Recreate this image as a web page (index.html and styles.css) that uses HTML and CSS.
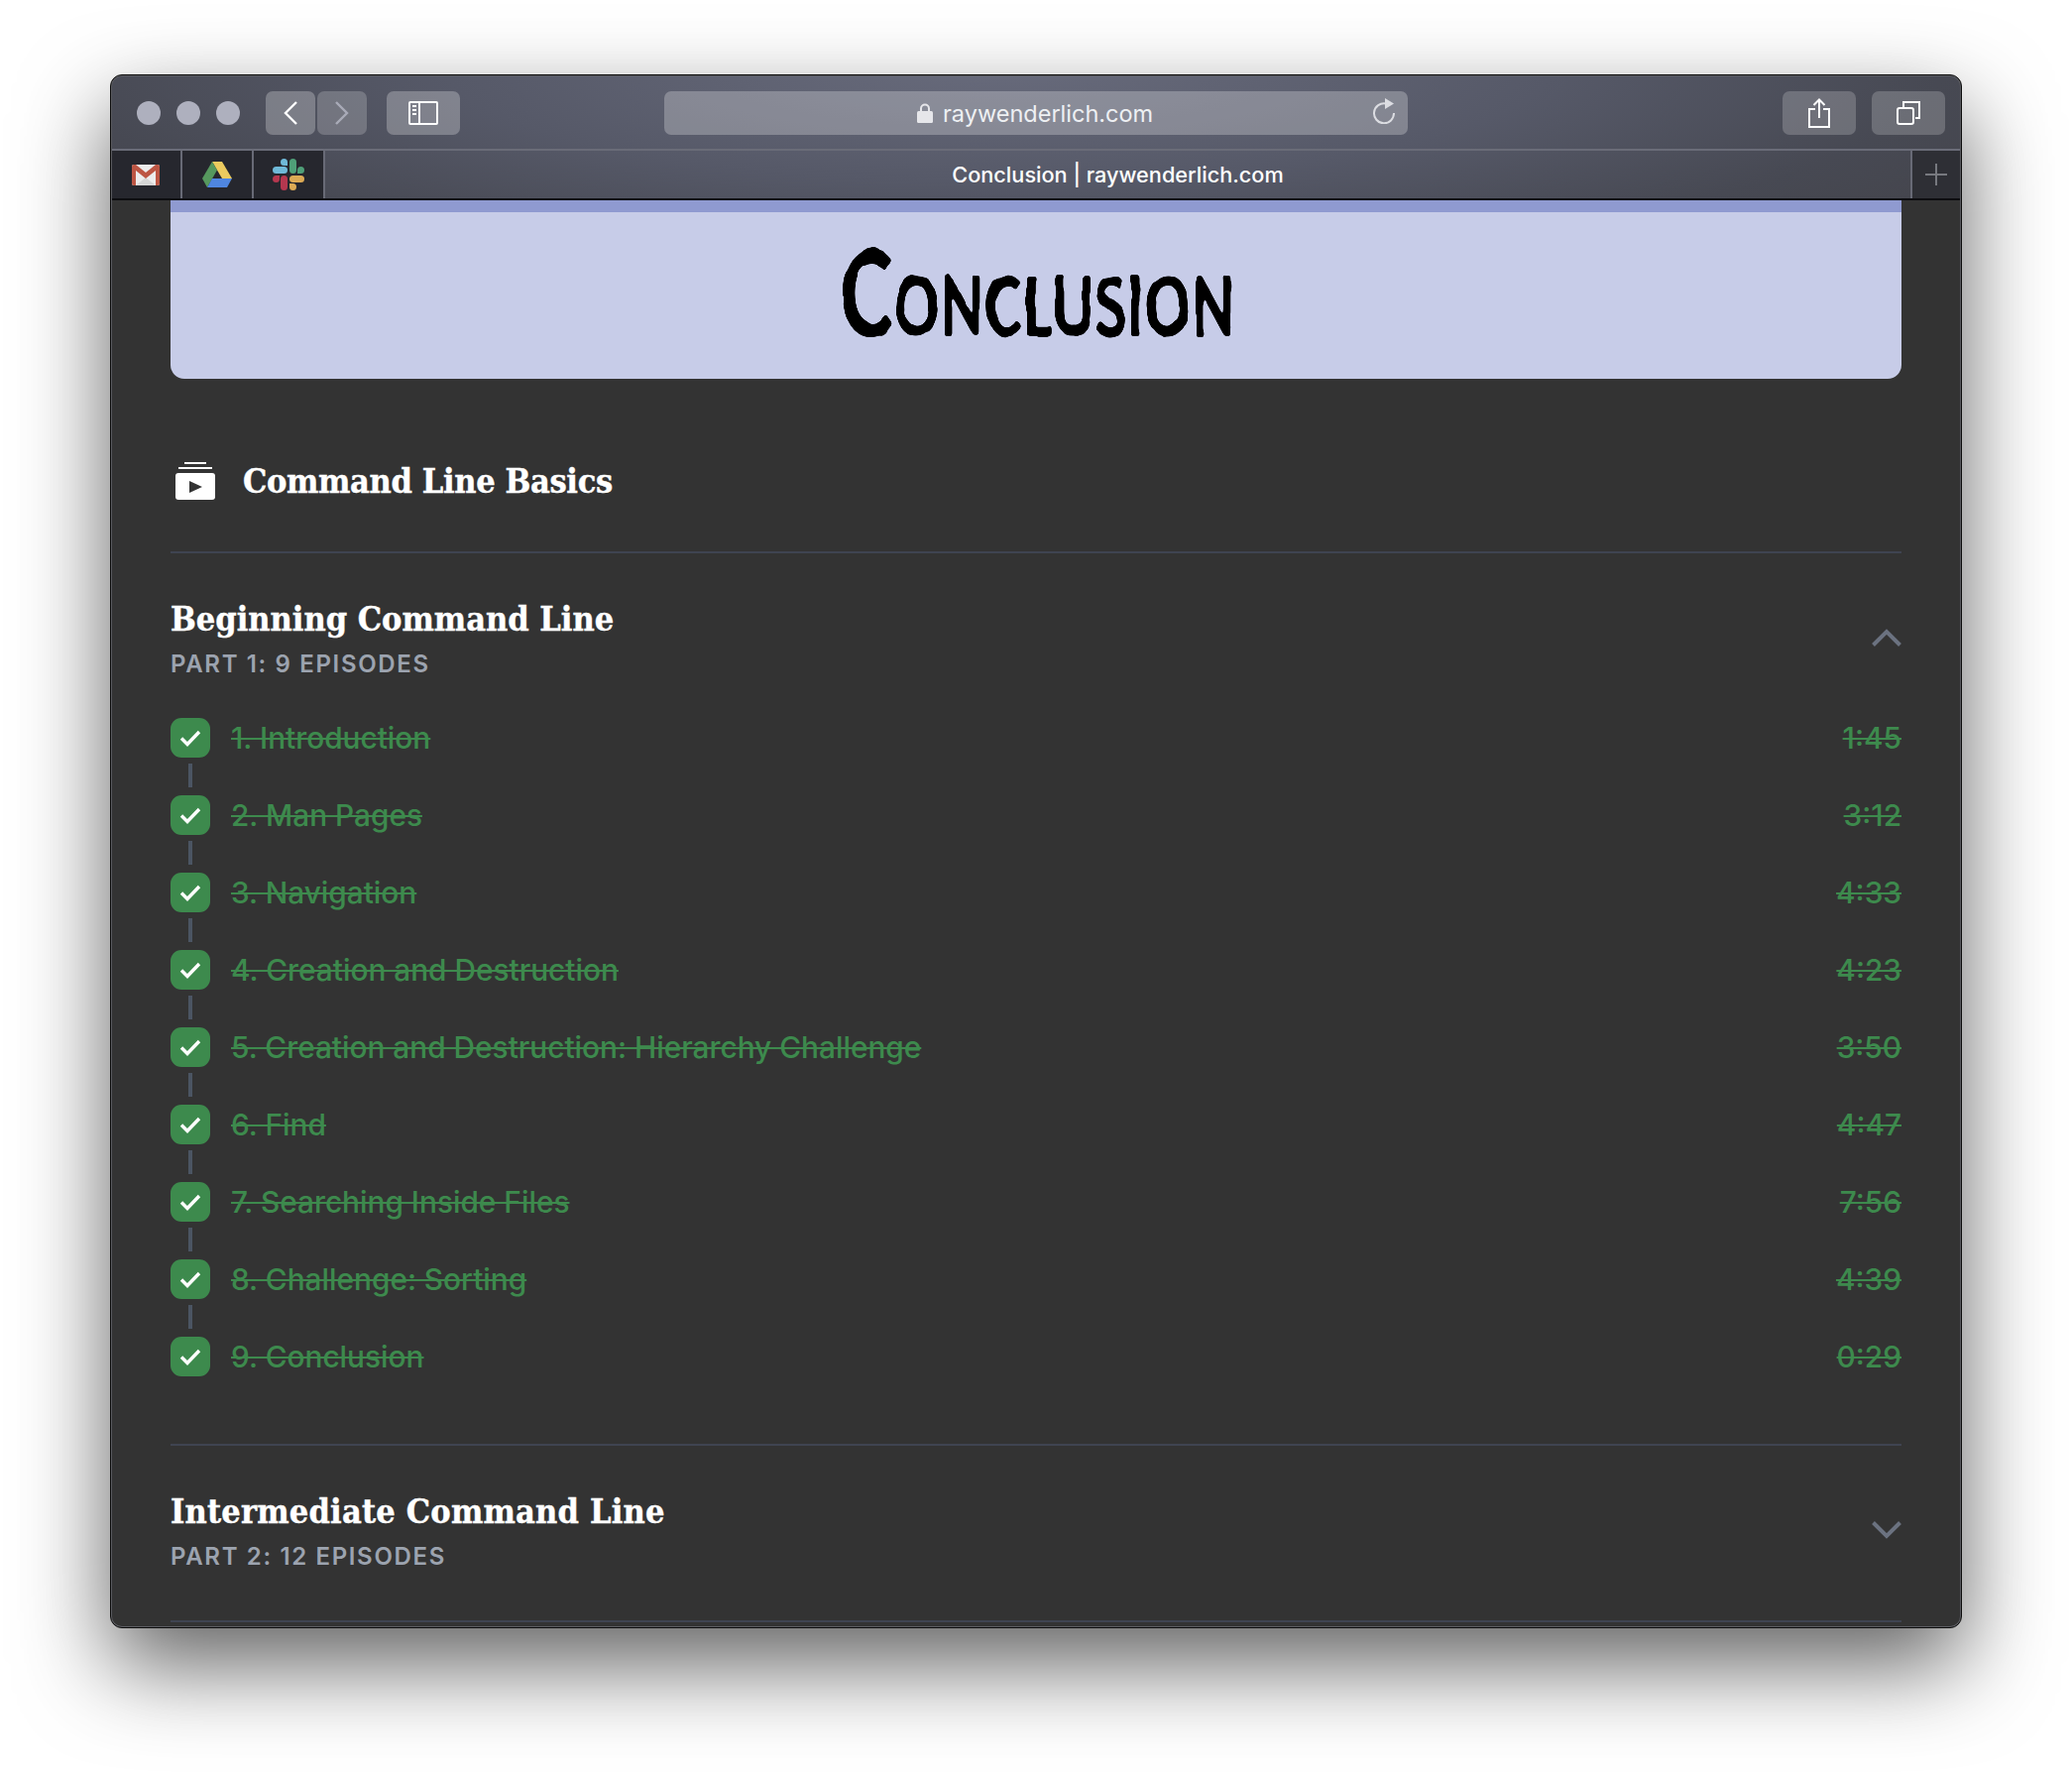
FILE: index.html
```html
<!DOCTYPE html>
<html lang="en">
<head>
<meta charset="utf-8">
<title>Conclusion | raywenderlich.com</title>
<link rel="stylesheet" href="styles.css">
</head>
<body>
<svg class="defs" width="0" height="0" aria-hidden="true"><filter id="hand" x="-5%" y="-5%" width="110%" height="110%"><feTurbulence type="fractalNoise" baseFrequency="0.035" numOctaves="2" seed="4" result="n"/><feDisplacementMap in="SourceGraphic" in2="n" scale="7" result="d"/><feGaussianBlur in="d" stdDeviation="1.6"/><feComponentTransfer><feFuncA type="linear" slope="6" intercept="-2.4"/></feComponentTransfer></filter></svg>
<div class="window">
  <header class="chrome">
    <div class="toolbar">
      <div class="traffic"><span class="dot"></span><span class="dot"></span><span class="dot"></span></div>
      <div class="nav">
        <button class="btn btn-nav"><svg width="14" height="24" viewBox="0 0 14 24"><path d="M13 1 2 12l11 11" class="stroke-w"/></svg></button>
        <button class="btn btn-nav btn-dim"><svg width="14" height="24" viewBox="0 0 14 24"><path d="M1 1l11 11L1 23" class="stroke-d"/></svg></button>
      </div>
      <button class="btn btn-wide btn-side"><svg width="30" height="24" viewBox="0 0 30 24"><rect x="1" y="1" width="28" height="22" rx="1" class="stroke-t"/><path d="M11 1v22" class="stroke-t"/><path d="M4 5h4M4 9h4M4 13h4" class="stroke-t"/></svg></button>
      <div class="url">
        <span class="url-text"><svg class="lock" width="16" height="20" viewBox="0 0 16 20"><path d="M4 9V5.500a4 4 0 0 1 8 0V9" fill="none" stroke="#e6e6ea" stroke-width="2"/><rect y="8" width="16" height="12" rx="1.500" fill="#e6e6ea"/></svg>raywenderlich.com</span>
        <svg class="reload" width="24" height="26" viewBox="0 0 24 26"><path d="M14 5.500A10 10 0 1 0 22 15" fill="none" stroke="#dcdde2" stroke-width="2"/><path d="M13 0l9 5.500-9 5.500z" fill="#dcdde2"/></svg>
      </div>
      <div class="actions">
        <button class="btn btn-wide btn-right"><svg width="22" height="30" viewBox="0 0 22 30"><path d="M7 11H1v18h20V11h-6M11 20V2M5.500 7 11 1.500 16.500 7" class="stroke-t"/></svg></button>
        <button class="btn btn-wide btn-right"><svg width="24" height="24" viewBox="0 0 24 24"><rect x="1" y="7" width="16" height="16" rx="2" class="stroke-t"/><path d="M7 6V1h16v16h-4" class="stroke-t"/></svg></button>
      </div>
    </div>
    <div class="tabbar">
      <div class="pin"><svg width="28" height="21" viewBox="0 0 28 21"><rect width="28" height="21" rx="2" fill="#ececec"/><path d="M4 21 14 13 24 21z" fill="#d6d6d6"/><path d="M0 2Q0 0 2 0h2l10 8 10-8h2q2 0 2 2v17q0 2-2 2h-2V6L14 14 4 6v15H2q-2 0-2-2z" fill="#bd5644"/></svg></div>
      <div class="pin"><svg width="30" height="26" viewBox="0 0 30 26"><path d="M10 0h10l10 17H20z" fill="#eccb5f"/><path d="M10 0l5 8.500L5 26 0 17z" fill="#56985e"/><path d="M10 17h20l-5 9H5z" fill="#4f86e0"/></svg></div>
      <div class="pin"><svg width="32" height="32" viewBox="0 0 32 32"><path d="M11.500 0a3.500 3.500 0 0 1 3.500 3.500V7h-3.500a3.500 3.500 0 0 1 0-7z" fill="#6fb9d8"/><rect y="8" width="15" height="7" rx="3.500" fill="#6fb9d8"/><rect x="17" width="7" height="15" rx="3.500" fill="#4f9f78"/><path d="M25 11.500a3.500 3.500 0 1 1 3.500 3.500H25z" fill="#4f9f78"/><path d="M7 20.500a3.500 3.500 0 1 1-3.500-3.500H7z" fill="#b5374f"/><rect x="8" y="17" width="7" height="15" rx="3.500" fill="#b5374f"/><rect x="17" y="17" width="15" height="7" rx="3.500" fill="#dcaa55"/><path d="M17 25h3.500a3.500 3.500 0 1 1-3.500 3.500z" fill="#dcaa55"/></svg></div>
      <div class="tab-title">Conclusion | raywenderlich.com</div>
      <div class="new-tab"><svg width="22" height="22" viewBox="0 0 22 22"><path d="M11 0v22M0 11h22" stroke="#77797f" stroke-width="2"/></svg></div>
    </div>
  </header>
  <main class="page">
    <div class="hero"><div class="hero-title"><span class="hero-cap">C</span>ONCLUSION</div></div>
    <div class="course">
      <svg width="40" height="38" viewBox="0 0 40 38"><path d="M9 1h22M3 6h34" stroke="#fff" stroke-width="2"/><rect y="11" width="40" height="27" rx="3" fill="#fff"/><path d="M14 19v12l13-6z" fill="#333"/></svg>
      <h1 class="course-title">Command Line Basics</h1>
    </div>
    <section class="part">
      <div class="part-head">
        <div><h2 class="part-title">Beginning Command Line</h2><p class="part-sub">PART 1: 9 EPISODES</p></div>
        <svg class="chev" width="30" height="18" viewBox="0 0 30 18"><path d="M1.500 16.500 15 3l13.500 13.500" fill="none" stroke="#6b7280" stroke-width="4"/></svg>
      </div>
      <ol class="episodes">
        <li class="ep"><span class="check"><svg width="22" height="18" viewBox="0 0 22 18"><path d="M2 9.500l6 6L20 3" class="tick"/></svg></span><span class="ep-name">1. Introduction</span><span class="ep-time">1:45</span></li>
        <li class="ep"><span class="check"><svg width="22" height="18" viewBox="0 0 22 18"><path d="M2 9.500l6 6L20 3" class="tick"/></svg></span><span class="ep-name">2. Man Pages</span><span class="ep-time">3:12</span></li>
        <li class="ep"><span class="check"><svg width="22" height="18" viewBox="0 0 22 18"><path d="M2 9.500l6 6L20 3" class="tick"/></svg></span><span class="ep-name">3. Navigation</span><span class="ep-time">4:33</span></li>
        <li class="ep"><span class="check"><svg width="22" height="18" viewBox="0 0 22 18"><path d="M2 9.500l6 6L20 3" class="tick"/></svg></span><span class="ep-name">4. Creation and Destruction</span><span class="ep-time">4:23</span></li>
        <li class="ep"><span class="check"><svg width="22" height="18" viewBox="0 0 22 18"><path d="M2 9.500l6 6L20 3" class="tick"/></svg></span><span class="ep-name">5. Creation and Destruction: Hierarchy Challenge</span><span class="ep-time">3:50</span></li>
        <li class="ep"><span class="check"><svg width="22" height="18" viewBox="0 0 22 18"><path d="M2 9.500l6 6L20 3" class="tick"/></svg></span><span class="ep-name">6. Find</span><span class="ep-time">4:47</span></li>
        <li class="ep"><span class="check"><svg width="22" height="18" viewBox="0 0 22 18"><path d="M2 9.500l6 6L20 3" class="tick"/></svg></span><span class="ep-name">7. Searching Inside Files</span><span class="ep-time">7:56</span></li>
        <li class="ep"><span class="check"><svg width="22" height="18" viewBox="0 0 22 18"><path d="M2 9.500l6 6L20 3" class="tick"/></svg></span><span class="ep-name">8. Challenge: Sorting</span><span class="ep-time">4:39</span></li>
        <li class="ep"><span class="check"><svg width="22" height="18" viewBox="0 0 22 18"><path d="M2 9.500l6 6L20 3" class="tick"/></svg></span><span class="ep-name">9. Conclusion</span><span class="ep-time">0:29</span></li>
      </ol>
    </section>
    <section class="part part-closed">
      <div class="part-head">
        <div><h2 class="part-title">Intermediate Command Line</h2><p class="part-sub">PART 2: 12 EPISODES</p></div>
        <svg class="chev" width="30" height="18" viewBox="0 0 30 18"><path d="M1.500 1.500 15 15 28.500 1.500" fill="none" stroke="#6b7280" stroke-width="4"/></svg>
      </div>
    </section>
  </main>
</div>
</body>
</html>
```
FILE: styles.css
```css
* { box-sizing: border-box; }
html, body { margin: 0; height: 100%; background: #fff; overflow: hidden; }
body { padding: 75px 111px 0; font-family: Inter, "Liberation Sans", sans-serif; }
h1, h2, p, ol { margin: 0; padding: 0; }
.defs { display: block; height: 0; }

.window {
  width: 1868px;
  height: 1567px;
  display: flex;
  flex-direction: column;
  border-radius: 12px;
  overflow: hidden;
  background: #5a5b60;
  padding: 1px;
  border: 1px solid #0c0c0c;
  box-shadow: 0 37px 90px 0 rgba(0,0,0,.62);
}

.chrome {
  border-radius: 10px 10px 0 0;
  background: radial-gradient(ellipse 60% 190% at 48% -10%, #686b7c 0%, #565968 50%, #474953 85%, #45464e 100%);
}
.toolbar {
  height: 75px;
  display: flex;
  align-items: center;
  padding: 1px 15px 0 25px;
  border-bottom: 2px solid #6a6c78;
}
.traffic { display: flex; gap: 16px; margin-right: 26px; }
.dot { width: 24px; height: 24px; border-radius: 50%; background: #aeb0be; }
.nav { display: flex; gap: 2px; margin-right: 20px; }
.btn {
  display: flex; align-items: center; justify-content: center;
  height: 44px; border: 0; padding: 0; border-radius: 7px;
  background: rgba(255,255,255,.26);
}
.btn-nav { width: 50px; }
.btn-dim { background: rgba(255,255,255,.2); }
.btn-wide { width: 74px; }
.btn-right { background: rgba(255,255,255,.2); }
.stroke-w, .stroke-t { fill: none; stroke: #fff; stroke-width: 2.4; }
.stroke-t { stroke-width: 2; }
.stroke-d { fill: none; stroke: #a9abb8; stroke-width: 2.4; }
.url {
  width: 750px; height: 44px; margin-left: 206px;
  display: flex; align-items: center; justify-content: space-between;
  padding: 0 12px 0 255px;
  border-radius: 7px;
  background: rgba(255,255,255,.26);
  color: #eef0f3; font-size: 23.5px;
}
.url-text { display: flex; align-items: center; gap: 10px; }
.reload { margin-top: -4px; }
.actions { display: flex; gap: 16px; margin-left: auto; }

.tabbar {
  height: 50px;
  display: flex;
  align-items: stretch;
  border-bottom: 2px solid #0d0d10;
}
.pin {
  width: 72px; display: flex; align-items: center; justify-content: center;
  background: #26272e; border-right: 2px solid #686a76;
}
.pin:first-child { width: 71px; padding-right: 1px; }
.tab-title {
  flex: 1; display: flex; align-items: center; justify-content: center;
  color: #fff; font-size: 21.7px; font-weight: 500;
}
.new-tab {
  width: 50px; display: flex; align-items: center; justify-content: center;
  background: #2e2f35; border-left: 2px solid #686a76;
}

.page { flex: 1; padding: 0 59px; overflow: hidden; background: #333; border-radius: 0 0 10px 10px; }
.hero {
  height: 180px; padding-bottom: 10px; padding-left: 3px;
  display: flex; align-items: center; justify-content: center;
  background: #c7cce8;
  border-top: 12px solid #8f9ad0;
  border-radius: 0 0 14px 14px;
}
.hero-title {
  color: #000; font-family: "Lato", sans-serif; font-weight: 900;
  font-size: 84px; line-height: 1; letter-spacing: 1px;
  transform: scaleX(.68);
  white-space: nowrap;
  filter: url(#hand);
}
.hero-cap { font-size: 120px; }

.course {
  height: 176px; padding-top: 31px;
  display: flex; align-items: center; gap: 28px;
  padding-left: 5px;
  border-bottom: 2px solid #3f4451;
}
.course-title, .part-title {
  font-family: "DejaVu Serif Condensed", "DejaVu Serif", serif;
  font-weight: 700; color: #fff; line-height: 44px;
  -webkit-text-stroke: .4px #fff;
}
.course-title { font-size: 34px; letter-spacing: -.35px; }
.part-title { font-size: 34px; }
.part-closed .part-title { letter-spacing: .2px; }
.part { padding-top: 44px; padding-bottom: 68px; border-bottom: 2px solid #3f4451; }
.part-closed { padding-bottom: 48px; }
.part-head { display: flex; align-items: center; justify-content: space-between; }
.part-sub {
  margin-top: 8px; font-size: 24px; line-height: 32px; font-weight: 600;
  letter-spacing: 1.65px; color: #9ca3af;
}
.chev { margin-top: -2px; }

.episodes { list-style: none; margin-top: 38px; display: flex; flex-direction: column; gap: 38px; }
.ep { display: flex; align-items: center; height: 40px; font-size: 29.8px; font-weight: 500; color: #3d8a4d; text-decoration: line-through; }
.check {
  position: relative; flex: none;
  width: 40px; height: 40px; border-radius: 11px; background: #3d8a4d;
  display: flex; align-items: center; justify-content: center;
  margin-right: 21px;
}
.check::after {
  content: ""; position: absolute; left: 18px; top: 46px;
  width: 4px; height: 24px; background: #4b5563;
}
.ep:last-child .check::after { display: none; }
.tick { fill: none; stroke: #fff; stroke-width: 3.4; }
.ep-time { margin-left: auto; }
```
